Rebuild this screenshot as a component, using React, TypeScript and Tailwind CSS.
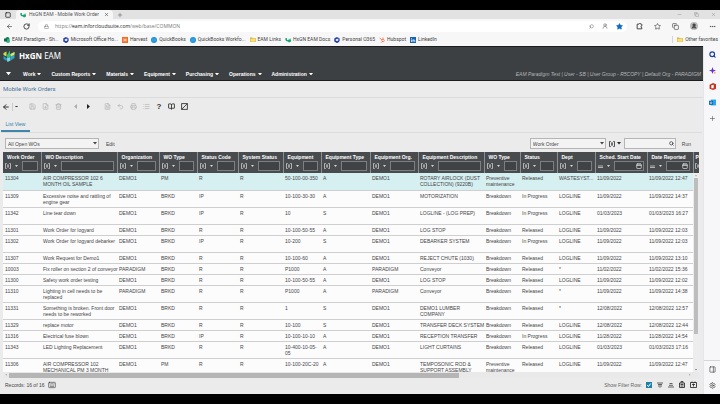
import React from 'react';
import {
  ArrowLeft, BookOpen, Calendar, Copy, Ellipsis, FilePlus, FileText, Keyboard, List, Lock, Minus, PanelRight, Plus, Printer,
  RotateCw, Save, Search, Settings, Square, Star, Trash2, Undo2, UserRound, X,
} from 'lucide-react';

type Column = { title: string; width: string; date?: boolean };

const columns: Column[] = [
  { title: 'Work Order', width: 'w-[38px]' },
  { title: 'WO Description', width: 'w-[76px]' },
  { title: 'Organization', width: 'w-[42px]' },
  { title: 'WO Type', width: 'w-[38px]' },
  { title: 'Status Code', width: 'w-[41px]' },
  { title: 'System Status', width: 'w-[45px]' },
  { title: 'Equipment', width: 'w-[38px]' },
  { title: 'Equipment Type', width: 'w-[49px]' },
  { title: 'Equipment Org.', width: 'w-[48px]' },
  { title: 'Equipment Description', width: 'w-[66px]' },
  { title: 'WO Type', width: 'w-[36px]' },
  { title: 'Status', width: 'w-[37px]' },
  { title: 'Dept', width: 'w-[38px]' },
  { title: 'Sched. Start Date', width: 'w-[52px]', date: true },
  { title: 'Date Reported', width: 'w-[46px]', date: true },
];

type Row = { tall?: boolean; cells: string[] };

const rows: Row[] = [
  { tall: true, cells: ['11304', 'AIR COMPRESSOR 102 6\nMONTH OIL SAMPLE', 'DEMO1', 'PM', 'R', 'R', '50-100-00-350', 'A', 'DEMO1', 'ROTARY AIRLOCK (DUST\nCOLLECTION) (9220B)', 'Preventive\nmaintenance', 'Released', 'WASTESYST...', '11/09/2022', '11/09/2022 12:47'] },
  { tall: true, cells: ['11309', 'Excessive noise and rattling of\nengine gear', 'DEMO1', 'BRKD', 'IP', 'R', '10-100-30-30', 'A', 'DEMO1', 'MOTORIZATION', 'Breakdown', 'In Progress', 'LOGLINE', '11/09/2022', '11/09/2022 14:37'] },
  { tall: true, cells: ['11342', 'Line tear down', 'DEMO1', 'BRKD', 'IP', 'R', '10', 'S', 'DEMO1', 'LOGLINE - (LOG PREP)', 'Breakdown', 'In Progress', 'LOGLINE', '01/03/2023', '01/03/2023 16:27'] },
  { cells: ['11301', 'Work Order for logyard', 'DEMO1', 'BRKD', 'R', 'R', '10-100-50-55', 'A', 'DEMO1', 'LOG STOP', 'Breakdown', 'Released', 'LOGLINE', '11/09/2022', '11/09/2022 12:03'] },
  { tall: true, cells: ['11302', 'Work Order for logyard debarker', 'DEMO1', 'BRKD', 'IP', 'R', '10-200', 'S', 'DEMO1', 'DEBARKER SYSTEM', 'Breakdown', 'In Progress', 'LOGLINE', '11/09/2022', '11/09/2022 12:03'] },
  { cells: ['11307', 'Work Request for Demo1', 'DEMO1', 'BRKD', 'R', 'R', '10-100-60', 'A', 'DEMO1', 'REJECT CHUTE (1030)', 'Breakdown', 'Released', 'LOGLINE', '11/09/2022', '11/09/2022 13:10'] },
  { cells: ['10003', 'Fix roller on section 2 of conveyor', 'PARADIGM', 'BRKD', 'R', 'R', 'P1000', 'A', 'PARADIGM', 'Conveyor', 'Breakdown', 'Released', '*', '11/02/2022', '11/02/2022 15:36'] },
  { cells: ['11300', 'Safety work order testing', 'DEMO1', 'BRKD', 'R', 'R', '10-100-50-55', 'A', 'DEMO1', 'LOG STOP', 'Breakdown', 'Released', 'LOGLINE', '11/09/2022', '11/09/2022 12:02'] },
  { tall: true, cells: ['11310', 'Lighting in cell needs to be\nreplaced', 'PARADIGM', 'BRKD', 'R', 'R', 'P1000', 'A', 'PARADIGM', 'Conveyor', 'Breakdown', 'Released', '*', '11/09/2022', '11/09/2022 14:38'] },
  { tall: true, cells: ['11331', 'Something is broken. Front door\nneeds to be reworked', 'DEMO1', 'BRKD', 'R', 'R', '1', 'S', 'DEMO1', 'DEMO1 LUMBER\nCOMPANY', 'Breakdown', 'Released', '*', '12/08/2022', '12/08/2022 12:57'] },
  { cells: ['11329', 'replace motor', 'DEMO1', 'BRKD', 'R', 'R', '10-100', 'S', 'DEMO1', 'TRANSFER DECK SYSTEM', 'Breakdown', 'Released', 'LOGLINE', '12/08/2022', '12/08/2022 12:44'] },
  { cells: ['11316', 'Electrical fuse blown', 'DEMO1', 'BRKD', 'IP', 'R', '10-100-10-10', 'A', 'DEMO1', 'RECEPTION TRANSFER', 'Breakdown', 'In Progress', 'LOGLINE', '11/28/2022', '11/28/2022 14:54'] },
  { tall: true, cells: ['11343', 'LED Lighting Replacement', 'DEMO1', 'BRKD', 'R', 'R', '10-400-10-05-\n05', 'A', 'DEMO1', 'LIGHT CURTAINS', 'Breakdown', 'Released', 'LOGLINE', '01/03/2023', '01/03/2023 17:16'] },
  { tall: true, cells: ['11306', 'AIR COMPRESSOR 102\nMECHANICAL PM 3 MONTH', 'DEMO1', 'PM', 'R', 'R', '10-100-20C-20', 'A', 'DEMO1', 'TEMPOSONIC ROD &\nSUPPORT ASSEMBLY', 'Preventive\nmaintenance', 'Released', 'LOGLINE', '11/09/2022', '11/09/2022 12:47'] },
];

const menus = ['Work', 'Custom Reports', 'Materials', 'Equipment', 'Purchasing', 'Operations', 'Administration'];

const Caret = ({ className = 'w-1' }: { className?: string }) => (
  <svg viewBox="0 0 8 5" className={`shrink-0 ${className}`} fill="currentColor">
    <path d="M0 0h8L4 5z" />
  </svg>
);

const Operator = () => (
  <svg viewBox="0 0 12 12" className="w-[6px] shrink-0" fill="none" stroke="currentColor" strokeWidth="1.5">
    <path d="M3.500 1H1v10h2.500M8.500 1H11v10H8.500M4 4h4M4 6h4M4 8h4" />
  </svg>
);

const HexLogo = ({ className }: { className: string }) => (
  <svg viewBox="0 0 24 24" className={className}>
    <path d="M1 6l6-3v10l-6-3z" fill="#c8e04a" />
    <path d="M8 10l6-9v15l-6 4z" fill="#38b98a" />
    <path d="M1 12l6 4v6l-6-4z" fill="#1d9ecb" />
    <path d="M7 17l8-2v6l-6 3z" fill="#7fd3ea" />
    <path d="M15 8l8-4v12l-8 5z" fill="#2fa6c8" />
    <path d="M15 8l8-4v5l-8 4z" fill="#e3e94f" />
  </svg>
);

const MiniHex = () => (
  <svg viewBox="0 0 12 12" className="w-[6px] shrink-0">
    <path d="M0 3l4-1v4h3l5-1v4l-4 2-2-2-4-1z" fill="#17a673" />
    <path d="M7 4l5-1v3H7z" fill="#4fc79c" />
  </svg>
);

const Office = () => (
  <svg viewBox="0 0 12 12" className="w-[6px] shrink-0" fill="none" strokeWidth="3">
    <path d="M6 1.500L10 4v4" stroke="#3b5fd0" />
    <path d="M10 8l-4 2.500L2 8V4l4-2.500" stroke="#2a3fa3" />
  </svg>
);

const Folder = () => (
  <svg viewBox="0 0 14 12" className="w-[6px] shrink-0">
    <path d="M0 1h5l2 2h7v9H0z" fill="#d9b13b" />
    <path d="M1 4h12v7H1z" fill="#f7e07a" />
  </svg>
);

const QuickBooks = () => (
  <svg viewBox="0 0 12 12" className="w-[6px] shrink-0">
    <circle cx="6" cy="6" r="6" fill="#1a8fdc" />
    <path d="M4 3v6M8 3v6" stroke="#8fd2f7" />
  </svg>
);

const bookmarks: { label: string; icon: React.ReactNode }[] = [
  {
    label: 'EAM Paradigm - Sh...',
    icon: (
      <svg viewBox="0 0 12 12" className="w-[6px] shrink-0">
        <circle cx="7" cy="4" r="4" fill="#12805c" />
        <circle cx="8" cy="8" r="4" fill="#2fb389" />
        <path d="M0 3h6v6H0z" fill="#0b6b4a" />
      </svg>
    ),
  },
  { label: 'Microsoft Office Ho...', icon: <Office /> },
  {
    label: 'Harvest',
    icon: (
      <svg viewBox="0 0 12 12" className="w-[6px] shrink-0">
        <path d="M0 0h12v12H0z" fill="#f36c21" />
        <path d="M4 3v6M8 3v6M4 6h4" stroke="#fff" strokeWidth="1.500" />
      </svg>
    ),
  },
  { label: 'QuickBooks', icon: <QuickBooks /> },
  { label: 'QuickBooks Workfo...', icon: <QuickBooks /> },
  { label: 'EAM Links', icon: <Folder /> },
  { label: 'HxGN EAM Docs', icon: <MiniHex /> },
  { label: 'Personal O365', icon: <Office /> },
  {
    label: 'Hubspot',
    icon: (
      <svg viewBox="0 0 12 12" className="w-[6px] shrink-0" fill="none" stroke="#f0664a" strokeWidth="1.500">
        <circle cx="8" cy="7" r="2.500" />
        <path d="M8 4.500V1M6 5.500L1 2M6.500 9L4 11.500" />
      </svg>
    ),
  },
  {
    label: 'LinkedIn',
    icon: (
      <svg viewBox="0 0 12 12" className="w-[6px] shrink-0">
        <path d="M0 0h12v12H0z" fill="#1663b5" />
        <path d="M3 5v5M6 10V5M6 7.500C6 5 9.500 5 9.500 7.500V10M3 2v1.500" stroke="#fff" strokeWidth="1.500" fill="none" />
      </svg>
    ),
  },
];

const BrowserChrome = () => (
  <div className="text-[5px] leading-[7px] text-[#555] font-[Roboto,'Noto_Sans',sans-serif]">
    {/* Tab strip */}
    <div className="h-[9px] bg-[#e3e2e3] flex items-stretch">
      <div className="w-4 flex items-center justify-center">
        <Square className="w-[6px] h-[6px] text-[#222]" strokeWidth={3} />
      </div>
      <div className="bg-[#f6f6f7] flex items-center gap-[3px] px-1 rounded-t-sm whitespace-nowrap">
        <MiniHex />
        <span>HxGN EAM - Mobile Work Order</span>
        <button aria-label="Close tab" className="ml-[2px]"><X className="w-[5px] h-[5px]" strokeWidth={3} /></button>
      </div>
      <button aria-label="New tab" className="ml-1"><Plus className="w-[6px] h-[6px]" /></button>
      <div className="ml-auto mr-1 flex items-center gap-3 text-[#888]">
        <Minus className="w-[5px] h-[5px]" />
        <Copy className="w-[5px] h-[5px]" />
        <X className="w-[5px] h-[5px]" />
      </div>
    </div>

    {/* Address bar */}
    <div className="h-[14px] bg-[#f7f7f8] flex items-center">
      <button aria-label="Back" className="ml-[6px]"><ArrowLeft className="w-[7px] h-[7px] text-[#333]" /></button>
      <button aria-label="Refresh" className="ml-[10px]"><RotateCw className="w-[7px] h-[7px] text-[#333]" strokeWidth={3} /></button>
      <div className="ml-2 flex-1 h-[11px] rounded-full bg-white flex items-center pl-[6px] pr-1">
        <Lock className="w-[5px] h-[5px]" />
        <span className="ml-[6px] flex-1 text-[#777] font-['Open_Sans','Noto_Sans',sans-serif]">
          https://<span className="text-[#222]">eam.inforcloudsuite.com</span>/web/base/COMMON
        </span>
        <Search className="w-[5px] h-[5px] -scale-x-100" />
        <UserRound className="ml-2 w-[6px] h-[6px]" />
        <Star className="ml-2 w-[7px] h-[7px] fill-[#0f6cbd] text-[#0f6cbd]" />
      </div>
      <div className="flex items-center gap-[11px] pl-[9px] pr-1 text-[#333]">
        <svg viewBox="0 0 12 12" className="w-[7px]" fill="none" stroke="currentColor" strokeWidth="1.500">
          <path d="M2 2h3a1.500 1.500 0 0 1 3 0h2v3a1.500 1.500 0 0 0 0 3v2H2z" />
        </svg>
        <Star className="w-[7px] h-[7px]" />
        <Copy className="w-[7px] h-[7px]" />
        <span className="w-2 h-2 rounded-full bg-[#bbb] flex items-center justify-center">
          <UserRound className="w-[6px] h-[6px] fill-[#555]" />
        </span>
        <Ellipsis className="w-[7px] h-[7px]" />
      </div>
    </div>

    {/* Favourites */}
    <div className="h-[13px] bg-[#f7f7f8] flex items-center gap-1 pl-1 pr-[2px] text-[#444]">
      {bookmarks.map((b) => (
        <a key={b.label} href="#" className="flex items-center gap-[2px] whitespace-nowrap">
          {b.icon}
          {b.label}
        </a>
      ))}
      <a href="#" className="ml-auto flex items-center gap-[2px] border-l border-[#d5d5d5] pl-1 whitespace-nowrap">
        <Folder />
        Other favorites
      </a>
    </div>
  </div>
);

const AppHeader = () => (
  <header className="h-[35px] shrink-0 bg-[#3c4043] border-y border-[#1b1d1f] text-white flex flex-col justify-between">
    <div className="flex items-center gap-1 pl-[3px] pt-[3px] font-['Noto_Sans',sans-serif]">
      <HexLogo className="w-[12px]" />
      <span className="text-[8px] leading-3">
        <b>HxGN</b> EAM
      </span>
    </div>
    <nav className="flex items-center gap-[10px] h-3 pl-[6px] pr-[2px] text-[5px] leading-[6px] font-bold">
      <button aria-label="Start menu" className="mr-[2px]"><Caret className="w-[5px]" /></button>
      {menus.map((m) => (
        <button key={m} className="flex items-center gap-[2px] whitespace-nowrap">
          {m}
          <Caret />
        </button>
      ))}
      <span className="ml-auto italic font-normal text-[#b4b7b9] whitespace-nowrap">
        EAM Paradigm Test | User - SB | User Group - R5COPY | Default Org - PARADIGM
      </span>
    </nav>
  </header>
);

const Toolbar = () => (
  <div className="h-[18px] shrink-0 border-t border-[#dcdcdc] flex items-center pl-[2px] text-[#adadad]">
    <button aria-label="Back to list" className="text-[#333]"><ArrowLeft className="w-2 h-2" strokeWidth={3} /></button>
    <span className="ml-[2px] h-2 w-px bg-[#ccc]" />
    <button aria-label="Back options" className="ml-[2px] text-[#333]"><Caret className="w-[3px]" /></button>
    <div className="ml-[11px] flex items-center gap-[6px]">
      <button aria-label="Save"><Save className="w-[7px] h-[7px]" /></button>
      <button aria-label="New"><FilePlus className="w-[7px] h-[7px]" /></button>
      <button aria-label="Delete"><Trash2 className="w-[7px] h-[7px]" /></button>
    </div>
    <div className="ml-[11px] flex items-center gap-2">
      <button aria-label="Previous"><Caret className="w-[5px] rotate-90" /></button>
      <button aria-label="Next" className="text-[#222]"><Caret className="w-[5px] -rotate-90" /></button>
    </div>
    <div className="ml-[13px] flex items-center gap-[6px]">
      <button aria-label="Copy record"><FileText className="w-[7px] h-[7px]" /></button>
      <button aria-label="Undo"><Undo2 className="w-[7px] h-[7px]" /></button>
      <button aria-label="Print"><Printer className="w-[7px] h-[7px]" /></button>
      <button aria-label="Report"><List className="w-[7px] h-[7px]" /></button>
      <button aria-label="Help" className="w-[6px] text-[8px] leading-[8px] font-bold text-[#333]">?</button>
      <button aria-label="Documentation" className="text-[#333]"><BookOpen className="w-[7px] h-[7px]" strokeWidth={3} /></button>
      <button aria-label="Screen designer" className="text-[#333]">
        <svg viewBox="0 0 12 12" className="w-[7px]" fill="none" stroke="currentColor" strokeWidth="1.500">
          <path d="M1 1h10v10H1zM1 11L11 1" />
        </svg>
      </button>
    </div>
  </div>
);

const FilterBar = () => (
  <div className="shrink-0 flex items-center mt-[5px] pl-[5px] pr-[12px] text-[#444]">
    <div className="relative w-[94px]">
      <select aria-label="Dataspy" className="block w-full h-[11px] appearance-none border border-[#b5b5b5] bg-[#f3f3f3] pl-[2px] outline-none">
        <option>All Open WOs</option>
      </select>
      <Caret className="w-1 absolute right-[2px] top-1" />
    </div>
    <button className="ml-[7px]">Edit</button>
    <div className="ml-auto relative w-[76px]">
      <select aria-label="Filter field" className="block w-full h-[11px] appearance-none border border-[#b5b5b5] bg-[#f3f3f3] pl-[2px] outline-none">
        <option>Work Order</option>
      </select>
      <Caret className="w-1 absolute right-[2px] top-1" />
    </div>
    <button aria-label="Filter operator" className="ml-[3px] flex items-center gap-[2px] text-[#222]">
      <Operator />
      <Caret />
    </button>
    <div className="ml-[3px] relative w-[52px]">
      <input aria-label="Filter value" className="block w-full h-[11px] border border-[#b5b5b5] bg-[#f3f3f3] px-[2px] outline-none" />
      <Search className="absolute right-[2px] top-[3px] w-[5px] h-[5px] text-[#222]" strokeWidth={3} />
    </div>
    <button className="ml-[6px]">Run</button>
  </div>
);

const WorkOrderGrid = () => (
  <div className="flex-1 min-h-0 relative overflow-hidden bg-white">
    <table className="table-fixed w-full border-collapse">
      <thead>
        <tr className="h-[21px] bg-[#484c4f] text-white">
          {columns.map((col, i) => (
            <th key={i} className={`${col.width} p-0 align-top border-r border-[#8b8e90] text-left`}>
              <div className="h-[9px] pt-[2px] pl-1 leading-[6px] whitespace-nowrap">{col.title}</div>
              <div className="flex items-center gap-1 pl-[2px] pr-[3px] text-[#d5d6d7]">
                {col.date ? (
                  <svg viewBox="0 0 10 10" className="w-[5px] shrink-0" stroke="currentColor" strokeWidth="1.500">
                    <path d="M0 4h10M0 7h10" />
                  </svg>
                ) : (
                  <Operator />
                )}
                <Caret className="w-[3px]" />
                <span className="relative flex-1 min-w-0">
                  <input aria-label={`${col.title} filter`} className="block w-full h-[10px] border border-[#7c8083] bg-[#3f4346] outline-none" />
                  {col.date && <Calendar className="absolute right-[2px] top-[2px] w-[6px] h-[6px]" strokeWidth={3} />}
                </span>
              </div>
            </th>
          ))}
          <th className="p-0 align-top text-left">
            <div className="h-[9px] pt-[2px] pl-[2px] leading-[6px]">P</div>
            <div className="pt-[2px] pl-[1px] overflow-hidden text-[#d5d6d7]"><Operator /></div>
          </th>
        </tr>
      </thead>
      <tbody>
        {rows.map((row, i) => (
          <tr
            key={row.cells[0]}
            className={`${row.tall ? 'h-[17px]' : 'h-[11px]'} border-b border-[#cfcfcf] ${i === 0 ? 'bg-[#d6eff1]' : 'bg-[#fcfcfd]'}`}
          >
            {row.cells.map((cell, j) => (
              <td key={j} className="p-0 pt-[2px] pl-[2px] align-top leading-[6px] whitespace-pre">
                {cell}
              </td>
            ))}
            <td className="p-0" />
          </tr>
        ))}
      </tbody>
    </table>

    {/* Vertical scrollbar */}
    <div className="absolute right-0 top-[21px] bottom-0 w-[6px] bg-[#ededee] flex flex-col items-center py-[2px] text-[#555]">
      <Caret className="w-[2px] rotate-180" />
      <div className="mt-[2px] w-1 h-4/5 bg-[#bdbdbd]" />
      <Caret className="w-[2px] mt-auto" />
    </div>
  </div>
);

const Footer = () => (
  <footer className="h-4 shrink-0 flex items-center pl-[5px] pr-[6px] pb-[3px] text-[#444]">
    <span>Records: 16 of 16</span>
    <Keyboard className="ml-1 w-2 h-2" />
    <label className="ml-auto flex items-center gap-1 text-[#666]">
      Show Filter Row:
      <span className="relative">
        <input type="checkbox" defaultChecked className="block w-[6px] h-[6px] appearance-none bg-[#1f7fa6]" />
        <svg viewBox="0 0 12 12" className="absolute inset-0 pointer-events-none" fill="none" stroke="#fff" strokeWidth="2">
          <path d="M2.500 6l2.500 3 4.500-6" />
        </svg>
      </span>
    </label>
    <div className="ml-[5px] flex items-center gap-[5px] text-[#333]">
      <svg viewBox="0 0 12 12" className="w-[6px]" fill="none" stroke="currentColor" strokeWidth="1.500">
        <path d="M0 2h12M2 5h8M2 8h8M5 10.500h2" />
      </svg>
      <svg viewBox="0 0 12 12" className="w-[6px]" fill="none" stroke="currentColor" strokeWidth="1.500">
        <path d="M3 3h6M2 6.500h8M0 10h12" />
      </svg>
      <svg viewBox="0 0 12 14" className="w-[6px]" fill="none" stroke="currentColor" strokeWidth="1.800">
        <path d="M1 4h10v9H1zM4 4V1h4v3M3 7h6M3 10h6" />
      </svg>
      <svg viewBox="0 0 14 14" className="w-[7px]" fill="none" stroke="currentColor" strokeWidth="1.800">
        <path d="M1 3h12v10H1zM4 1v3M10 1v3M4 7h6M7 5v6" />
      </svg>
    </div>
  </footer>
);

const EdgeSidebar = () => (
  <aside className="w-[17px] shrink-0 bg-[#f7f6f8] border-l border-[#e6e6e8] flex flex-col items-center pt-[5px] pb-[5px] text-[#555]">
    <div className="flex flex-col items-center gap-[9px]">
      <Search className="w-[7px] h-[7px] text-[#1b3fa0]" strokeWidth={4} />
      <svg viewBox="0 0 12 12" className="w-[7px]">
        <path d="M6 0l1.500 4.500L12 6l-4.500 1.500L6 12l-1.500-4.500L0 6l4.500-1.500z" fill="#6b2fd6" />
        <path d="M9 8l3 2-3 2z" fill="#f0a030" />
      </svg>
      <svg viewBox="0 0 12 12" className="w-[7px]">
        <path d="M7 0l5 2v8l-5 2-6-2V3z" fill="#c8321a" />
        <path d="M4 4l4-1v6H4z" fill="#fff" />
      </svg>
      <svg viewBox="0 0 12 12" className="w-[7px]">
        <path d="M3 1h9v10H3z" fill="#28a8ea" />
        <path d="M0 3h7v7H0z" fill="#0f64b0" />
        <circle cx="3.500" cy="6.500" r="1.500" fill="none" stroke="#fff" />
      </svg>
      <Plus className="w-[7px] h-[7px]" />
    </div>
    <div className="mt-auto w-full border-t border-[#d5d5d5] pt-[5px] flex flex-col items-center gap-[9px] text-[#333]">
      <PanelRight className="w-[7px] h-[7px]" />
      <Settings className="w-[7px] h-[7px]" />
    </div>
  </aside>
);

const App: React.FC = () => {
  return (
    <div className="h-screen bg-black py-[10px] overflow-hidden font-['Liberation_Sans',Arial,sans-serif] text-[5px] leading-[6px] text-[#444]">
      <div className="h-full flex flex-col bg-[#ecebec]">
        <BrowserChrome />
        <div className="flex-1 min-h-0 flex">
          <main className="flex-1 min-w-0 flex flex-col">
            <AppHeader />
            <h1 className="h-4 shrink-0 pl-[3px] pt-1 text-[6px] leading-[7px] text-[#4a7396] font-[Roboto,'Noto_Sans',sans-serif]">
              Mobile Work Orders
            </h1>
            <Toolbar />
            <div className="h-[18px] shrink-0 mx-[1px] border-b border-[#dcdcdc] flex items-end">
              <button className="h-3 w-[29px] border-b-2 border-[#3f86a8] pb-[3px] text-[#2f7fa6]">List View</button>
            </div>
            <FilterBar />
            <div className="flex-1 min-h-0 mt-[3px] ml-[3px] mr-1 flex flex-col">
              <WorkOrderGrid />
              {/* Horizontal scrollbar */}
              <div className="h-[6px] shrink-0 bg-[#e9e9ea] flex items-center justify-between px-[2px] text-[#555]">
                <Caret className="w-[2px] rotate-90" />
                <div className="ml-[2px] w-[65%] h-[5px] bg-[#b5b5b5]" />
                <Caret className="w-[2px] -rotate-90 ml-auto mr-[6px]" />
              </div>
            </div>
            <Footer />
          </main>
          <EdgeSidebar />
        </div>
      </div>
    </div>
  );
};

export default App;
